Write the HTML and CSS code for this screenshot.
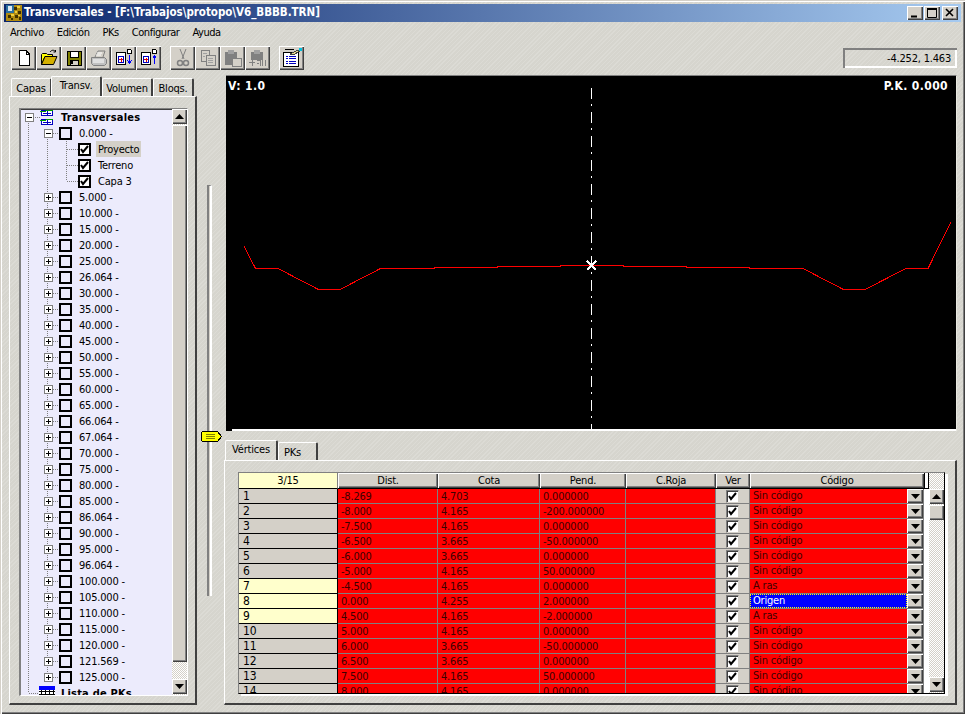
FILE: index.html
```html
<!DOCTYPE html>
<html lang="es">
<head>
<meta charset="utf-8">
<title>Transversales</title>
<link rel="stylesheet" href="styles.css">
</head>
<body>
<svg class="defs" width="0" height="0" aria-hidden="true">
  <symbol id="ck" viewBox="0 0 13 13"><path d="M3 6l2 3 5-6" fill="none" stroke="#000" stroke-width="2"/></symbol>
  <symbol id="plus" viewBox="0 0 9 9"><rect x=".5" y=".5" width="8" height="8" fill="#fff" stroke="#808080"/><path d="M2 4.500h5M4.500 2v5" stroke="#000"/></symbol>
  <symbol id="minus" viewBox="0 0 9 9"><rect x=".5" y=".5" width="8" height="8" fill="#fff" stroke="#808080"/><path d="M2 4.500h5" stroke="#000"/></symbol>
  <symbol id="up" viewBox="0 0 9 5"><path d="M4.500 0L9 5H0z"/></symbol>
  <symbol id="down" viewBox="0 0 9 5"><path d="M0 0h9L4.500 5z"/></symbol>
</svg>
<div class="window">
  <header class="title">
    <svg class="app-icon" width="16" height="16" viewBox="0 0 16 16"><rect width="16" height="16" fill="#b08a10"/><rect width="8" height="8" fill="#2a6f9f"/><rect x="2" y="1" width="4" height="5" fill="#dfe8f0"/><path d="M8 2h3v3H8zM12 6h3v3h-3zM9 10h3v3H9zM2 10h3v3H2zM5 13h2v2H5zM13 12h2v3h-2z" fill="#403000"/><path d="M11 1h3v2h-3zM9 6h2v2H9zM5 9h3v2H5zM12 10h2v1h-2z" fill="#f0d040"/></svg>
    <span class="title-text">Transversales - [F:\Trabajos\protopo\V6_BBBB.TRN]</span>
    <div class="caption-btns">
      <button class="cap"><svg width="14" height="12" viewBox="0 0 14 12"><path d="M3 9.500h6" stroke="#000" stroke-width="2"/></svg></button>
      <button class="cap"><svg width="14" height="12" viewBox="0 0 14 12"><path d="M2.500 1.500h9v9h-9z" fill="none" stroke="#000"/><path d="M2 2h10" stroke="#000" stroke-width="2"/></svg></button>
      <button class="cap cap-x"><svg width="14" height="12" viewBox="0 0 14 12"><path d="M3 2l7 7M10 2l-7 7" stroke="#000" stroke-width="1.600"/></svg></button>
    </div>
  </header>
  <nav class="menu"><span>Archivo</span><span>Edición</span><span>PKs</span><span>Configurar</span><span>Ayuda</span></nav>
  <div class="toolbar">
    <div class="tools">
      <button class="tool"><svg width="18" height="18" viewBox="0 0 18 18" shape-rendering="crispEdges"><path d="M4 1.500h7l3.500 3.500v11.500H4z" fill="#fff" stroke="#000"/><path d="M11 2v3h3" fill="none" stroke="#000"/></svg></button>
      <button class="tool"><svg width="18" height="18" viewBox="0 0 18 18"><path d="M1.500 15.500V5.500l1-1h4l1 1h5v2H5L1.500 15.500z" fill="#ffff00" stroke="#000"/><path d="M1.500 15.500l3.500-8h12l-3.500 8z" fill="#d4b000" stroke="#000"/><path d="M10 3c2-2.500 4-2 5.500-.5M15.500 1v2h-2" fill="none" stroke="#000"/></svg></button>
      <button class="tool"><svg width="18" height="18" viewBox="0 0 18 18" shape-rendering="crispEdges"><path d="M2 2h14v14H2z" fill="#808000" stroke="#000"/><path d="M5 2h8v6H5z" fill="#fff" stroke="#000"/><path d="M5 11h8v5H5z" fill="#d4d0c8" stroke="#000"/><path d="M6 12h2v3H6z" fill="#000"/></svg></button>
      <button class="tool"><svg width="18" height="18" viewBox="0 0 18 18" fill="none" stroke="#808080"><path d="M5 8l3-6h7l-2 6"/><path d="M1.500 8.500h13l2 2v4l-2 2h-11l-2-2z" fill="#c0c0c0"/><path d="M3 11h11M3 13h11M7 4h5M6 6h5" stroke="#fff"/></svg></button>
      <button class="tool"><svg width="20" height="20" viewBox="0 0 20 20" shape-rendering="crispEdges"><path d="M2.500 4.500h9v12h-9z" fill="#fff" stroke="#000"/><path d="M4.500 8.500h5v6h-5z" fill="#fff" stroke="#0000c0"/><path d="M5 11.500h4M7 9.500v4" stroke="#e00000"/><path d="M13.500 1.500h3l1 1v3h-4z" fill="#fff" stroke="#000"/><path d="M15.500 7v8M13.500 12.500l2 3 2-3" fill="none" stroke="#0000ff"/></svg></button>
      <button class="tool"><svg width="20" height="20" viewBox="0 0 20 20" shape-rendering="crispEdges"><path d="M2.500 4.500h9v12h-9z" fill="#fff" stroke="#000"/><path d="M4.500 8.500h5v6h-5z" fill="#fff" stroke="#0000c0"/><path d="M5 11.500h4M7 9.500v4" stroke="#e00000"/><path d="M13.500 1.500h3l1 1v3h-4z" fill="#fff" stroke="#000"/><path d="M15.500 16V8M13.500 10.500l2-3 2 3" fill="none" stroke="#0000ff"/></svg></button>
    </div>
    <div class="tools group2">
      <button class="tool"><svg width="18" height="20" viewBox="0 0 18 20" fill="none" stroke="#808080"><path d="M6 1l4 10M12 1L8 11"/><circle cx="6" cy="15" r="2.500" stroke-width="1.500"/><circle cx="12" cy="15" r="2.500" stroke-width="1.500"/></svg></button>
      <button class="tool"><svg width="18" height="18" viewBox="0 0 18 18" fill="#d4d0c8" stroke="#808080" shape-rendering="crispEdges"><path d="M2 1.500h8v11H2z"/><path d="M7 6.500h9v10H7z"/><path d="M4 4h4M4 7h2M9 9h5M9 11h5M9 13h5" stroke="#a0a0a0"/></svg></button>
      <button class="tool"><svg width="20" height="20" viewBox="0 0 20 20" shape-rendering="crispEdges"><path d="M2 4h12v13H2z" fill="#808080"/><path d="M5 2h6v4H5z" fill="#a0a0a0"/><path d="M9 10h9v8H9z" fill="#d4d0c8" stroke="#808080"/></svg></button>
      <button class="tool"><svg width="20" height="20" viewBox="0 0 20 20" shape-rendering="crispEdges"><path d="M3 4h12v8H3z" fill="#808080"/><path d="M6 2h6v4H6z" fill="#a0a0a0"/><path d="M1 14h6M4 12v6M9 12h3v6M9 15h2M14 12v6M17 12v6" stroke="#808080" fill="none"/></svg></button>
    </div>
    <div class="tools group3">
      <button class="tool"><svg width="22" height="20" viewBox="0 0 22 20" shape-rendering="crispEdges"><path d="M2.500 4.500h15v14h-15z" fill="#fff" stroke="#000"/><path d="M4 1.500h9" stroke="#000"/><path d="M5 8h2M8 8h7M5 10.500h2M8 10.500h7M5 13h2M8 13h7M5 15.500h2M8 15.500h7" stroke="#0000c0"/><path d="M9 6l8-4 2 1-7 4z" fill="#e8d890" stroke="#404040"/><path d="M18 0h3v3h-3z" fill="#00c0e0"/></svg></button>
    </div>
    <output class="coords">-4.252, 1.463</output>
  </div>

  <main class="main">
    <aside class="left">
      <div class="tabs">
        <span class="tab tab-capas">Capas</span><span class="tab tab-on tab-transv">Transv.</span><span class="tab tab-vol">Volumen</span><span class="tab tab-bloq">Bloqs.</span>
      </div>
      <div class="panel-left">
        <div class="tree">
          <div class="tree-list">
            <div class="r root"><svg class="exp" width="9" height="9"><use href="#minus"/></svg><svg class="root-ico" width="16" height="18" viewBox="0 0 16 18" shape-rendering="crispEdges"><path d="M2.500 2.500h11v5h-11zM2.500 11.500h11v5h-11z" fill="#fff" stroke="#0000c0"/><path d="M8 3v4M8 12v4M4 5h8M4 14h8" stroke="#0000c0"/><path d="M1 3h6M7 2h7M1 12h6M7 11h7" stroke="#00a000"/></svg><b>Transversales</b></div>
            <div class="r first"><svg class="exp" width="9" height="9"><use href="#minus"/></svg><i class="box"></i><span>0.000 -</span></div>
            <div class="r2"><i class="cbx"><svg width="13" height="13"><use href="#ck"/></svg></i><span class="sel">Proyecto</span></div>
            <div class="r2"><i class="cbx"><svg width="13" height="13"><use href="#ck"/></svg></i><span>Terreno</span></div>
            <div class="r2 r2-end"><i class="cbx"><svg width="13" height="13"><use href="#ck"/></svg></i><span>Capa 3</span></div>
            <div class="r"><svg class="exp" width="9" height="9"><use href="#plus"/></svg><i class="box"></i><span>5.000 -</span></div>
            <div class="r"><svg class="exp" width="9" height="9"><use href="#plus"/></svg><i class="box"></i><span>10.000 -</span></div>
            <div class="r"><svg class="exp" width="9" height="9"><use href="#plus"/></svg><i class="box"></i><span>15.000 -</span></div>
            <div class="r"><svg class="exp" width="9" height="9"><use href="#plus"/></svg><i class="box"></i><span>20.000 -</span></div>
            <div class="r"><svg class="exp" width="9" height="9"><use href="#plus"/></svg><i class="box"></i><span>25.000 -</span></div>
            <div class="r"><svg class="exp" width="9" height="9"><use href="#plus"/></svg><i class="box"></i><span>26.064 -</span></div>
            <div class="r"><svg class="exp" width="9" height="9"><use href="#plus"/></svg><i class="box"></i><span>30.000 -</span></div>
            <div class="r"><svg class="exp" width="9" height="9"><use href="#plus"/></svg><i class="box"></i><span>35.000 -</span></div>
            <div class="r"><svg class="exp" width="9" height="9"><use href="#plus"/></svg><i class="box"></i><span>40.000 -</span></div>
            <div class="r"><svg class="exp" width="9" height="9"><use href="#plus"/></svg><i class="box"></i><span>45.000 -</span></div>
            <div class="r"><svg class="exp" width="9" height="9"><use href="#plus"/></svg><i class="box"></i><span>50.000 -</span></div>
            <div class="r"><svg class="exp" width="9" height="9"><use href="#plus"/></svg><i class="box"></i><span>55.000 -</span></div>
            <div class="r"><svg class="exp" width="9" height="9"><use href="#plus"/></svg><i class="box"></i><span>60.000 -</span></div>
            <div class="r"><svg class="exp" width="9" height="9"><use href="#plus"/></svg><i class="box"></i><span>65.000 -</span></div>
            <div class="r"><svg class="exp" width="9" height="9"><use href="#plus"/></svg><i class="box"></i><span>66.064 -</span></div>
            <div class="r"><svg class="exp" width="9" height="9"><use href="#plus"/></svg><i class="box"></i><span>67.064 -</span></div>
            <div class="r"><svg class="exp" width="9" height="9"><use href="#plus"/></svg><i class="box"></i><span>70.000 -</span></div>
            <div class="r"><svg class="exp" width="9" height="9"><use href="#plus"/></svg><i class="box"></i><span>75.000 -</span></div>
            <div class="r"><svg class="exp" width="9" height="9"><use href="#plus"/></svg><i class="box"></i><span>80.000 -</span></div>
            <div class="r"><svg class="exp" width="9" height="9"><use href="#plus"/></svg><i class="box"></i><span>85.000 -</span></div>
            <div class="r"><svg class="exp" width="9" height="9"><use href="#plus"/></svg><i class="box"></i><span>86.064 -</span></div>
            <div class="r"><svg class="exp" width="9" height="9"><use href="#plus"/></svg><i class="box"></i><span>90.000 -</span></div>
            <div class="r"><svg class="exp" width="9" height="9"><use href="#plus"/></svg><i class="box"></i><span>95.000 -</span></div>
            <div class="r"><svg class="exp" width="9" height="9"><use href="#plus"/></svg><i class="box"></i><span>96.064 -</span></div>
            <div class="r"><svg class="exp" width="9" height="9"><use href="#plus"/></svg><i class="box"></i><span>100.000 -</span></div>
            <div class="r"><svg class="exp" width="9" height="9"><use href="#plus"/></svg><i class="box"></i><span>105.000 -</span></div>
            <div class="r"><svg class="exp" width="9" height="9"><use href="#plus"/></svg><i class="box"></i><span>110.000 -</span></div>
            <div class="r"><svg class="exp" width="9" height="9"><use href="#plus"/></svg><i class="box"></i><span>115.000 -</span></div>
            <div class="r"><svg class="exp" width="9" height="9"><use href="#plus"/></svg><i class="box"></i><span>120.000 -</span></div>
            <div class="r"><svg class="exp" width="9" height="9"><use href="#plus"/></svg><i class="box"></i><span>121.569 -</span></div>
            <div class="r last"><svg class="exp" width="9" height="9"><use href="#plus"/></svg><i class="box"></i><span>125.000 -</span></div>
            <div class="r lista"><svg class="lista-ico" width="16" height="14" viewBox="0 0 16 14" shape-rendering="crispEdges"><path d="M0 0h16v4H0z" fill="#0000ff"/><path d="M0 4h16v10H0z" fill="#fff"/><path d="M0 5h16M0 8h16M0 11h16M2 4v10M6 4v10M10 4v10M14 4v10" stroke="#000" fill="none"/></svg><b>Lista de PKs</b></div>
          </div>
          <div class="vscroll">
            <button class="sbtn"><svg width="9" height="5"><use href="#up"/></svg></button>
            <div class="thumb thumb-long"></div>
            <div class="track"></div>
            <button class="sbtn"><svg width="9" height="5"><use href="#down"/></svg></button>
          </div>
        </div>
      </div>
    </aside>

    <div class="slider">
      <div class="groove"></div>
      <svg class="knob" width="21" height="12" viewBox="0 0 21 12" shape-rendering="crispEdges"><path d="M.5 1.500l1-1h15l4 5-4 5h-15l-1-1z" fill="#ffff00" stroke="#000"/><path d="M5 3.500h9M5 5.500h9M5 7.500h9" stroke="#808000"/></svg>
    </div>

    <section class="right">
      <div class="canvas">
        <svg class="plot" width="730" height="355" viewBox="226 76 730 355">
          <path class="axis" d="M591.500 88V431"/>
          <polyline class="profile" points="244,246 255.500,268.500 278,268.500 318.500,289.500 340,289.500 380.500,268.500 434,268.500 434,267.500 497,267.500 497,266.500 560,266.500 560,265.500 623,265.500 623,266.500 686,266.500 686,267.500 749,267.500 749,268.500 803,268.500 843.500,289.500 865,289.500 906,268.500 928,268.500 951,222"/>
          <path class="star" d="M587 261l9 9M596 261l-9 9"/>
        </svg>
        <span class="lab lab-v">V: 1.0</span>
        <span class="lab lab-pk">P.K. 0.000</span>
        <div class="base"></div>
      </div>
      <div class="tabs tabs-r">
        <span class="tab tab-on tab-vert">Vértices</span><span class="tab tab-pks">PKs</span>
      </div>
      <div class="panel-right">
        <div class="grid">
          <table class="tbl">
            <colgroup><col class="c0"><col class="c1"><col class="c2"><col class="c3"><col class="c4"><col class="c5"><col class="c6"><col class="c7"></colgroup>
            <thead><tr><th class="count">3/15</th><th>Dist.</th><th>Cota</th><th>Pend.</th><th>C.Roja</th><th>Ver</th><th>Código</th><th class="stub"></th></tr></thead>
            <tbody>
              <tr><td class="n">1</td><td>-8.269</td><td>4.703</td><td>0.000000</td><td></td><td class="v"><i class="tick"><svg width="13" height="13"><use href="#ck"/></svg></i></td><td class="code"><span>Sin código</span><button class="drop"><svg width="9" height="5"><use href="#down"/></svg></button></td><td class="gap"></td></tr>
              <tr><td class="n">2</td><td>-8.000</td><td>4.165</td><td>-200.000000</td><td></td><td class="v"><i class="tick"><svg width="13" height="13"><use href="#ck"/></svg></i></td><td class="code"><span>Sin código</span><button class="drop"><svg width="9" height="5"><use href="#down"/></svg></button></td><td class="gap"></td></tr>
              <tr><td class="n">3</td><td>-7.500</td><td>4.165</td><td>0.000000</td><td></td><td class="v"><i class="tick"><svg width="13" height="13"><use href="#ck"/></svg></i></td><td class="code"><span>Sin código</span><button class="drop"><svg width="9" height="5"><use href="#down"/></svg></button></td><td class="gap"></td></tr>
              <tr><td class="n">4</td><td>-6.500</td><td>3.665</td><td>-50.000000</td><td></td><td class="v"><i class="tick"><svg width="13" height="13"><use href="#ck"/></svg></i></td><td class="code"><span>Sin código</span><button class="drop"><svg width="9" height="5"><use href="#down"/></svg></button></td><td class="gap"></td></tr>
              <tr><td class="n">5</td><td>-6.000</td><td>3.665</td><td>0.000000</td><td></td><td class="v"><i class="tick"><svg width="13" height="13"><use href="#ck"/></svg></i></td><td class="code"><span>Sin código</span><button class="drop"><svg width="9" height="5"><use href="#down"/></svg></button></td><td class="gap"></td></tr>
              <tr><td class="n">6</td><td>-5.000</td><td>4.165</td><td>50.000000</td><td></td><td class="v"><i class="tick"><svg width="13" height="13"><use href="#ck"/></svg></i></td><td class="code"><span>Sin código</span><button class="drop"><svg width="9" height="5"><use href="#down"/></svg></button></td><td class="gap"></td></tr>
              <tr><td class="n hl">7</td><td>-4.500</td><td>4.165</td><td>0.000000</td><td></td><td class="v"><i class="tick"><svg width="13" height="13"><use href="#ck"/></svg></i></td><td class="code"><span>A ras</span><button class="drop"><svg width="9" height="5"><use href="#down"/></svg></button></td><td class="gap"></td></tr>
              <tr><td class="n hl">8</td><td>0.000</td><td>4.255</td><td>2.000000</td><td></td><td class="v"><i class="tick"><svg width="13" height="13"><use href="#ck"/></svg></i></td><td class="code active"><span>Origen</span><button class="drop"><svg width="9" height="5"><use href="#down"/></svg></button></td><td class="gap"></td></tr>
              <tr><td class="n hl">9</td><td>4.500</td><td>4.165</td><td>-2.000000</td><td></td><td class="v"><i class="tick"><svg width="13" height="13"><use href="#ck"/></svg></i></td><td class="code"><span>A ras</span><button class="drop"><svg width="9" height="5"><use href="#down"/></svg></button></td><td class="gap"></td></tr>
              <tr><td class="n">10</td><td>5.000</td><td>4.165</td><td>0.000000</td><td></td><td class="v"><i class="tick"><svg width="13" height="13"><use href="#ck"/></svg></i></td><td class="code"><span>Sin código</span><button class="drop"><svg width="9" height="5"><use href="#down"/></svg></button></td><td class="gap"></td></tr>
              <tr><td class="n">11</td><td>6.000</td><td>3.665</td><td>-50.000000</td><td></td><td class="v"><i class="tick"><svg width="13" height="13"><use href="#ck"/></svg></i></td><td class="code"><span>Sin código</span><button class="drop"><svg width="9" height="5"><use href="#down"/></svg></button></td><td class="gap"></td></tr>
              <tr><td class="n">12</td><td>6.500</td><td>3.665</td><td>0.000000</td><td></td><td class="v"><i class="tick"><svg width="13" height="13"><use href="#ck"/></svg></i></td><td class="code"><span>Sin código</span><button class="drop"><svg width="9" height="5"><use href="#down"/></svg></button></td><td class="gap"></td></tr>
              <tr><td class="n">13</td><td>7.500</td><td>4.165</td><td>50.000000</td><td></td><td class="v"><i class="tick"><svg width="13" height="13"><use href="#ck"/></svg></i></td><td class="code"><span>Sin código</span><button class="drop"><svg width="9" height="5"><use href="#down"/></svg></button></td><td class="gap"></td></tr>
              <tr><td class="n">14</td><td>8.000</td><td>4.165</td><td>0.000000</td><td></td><td class="v"><i class="tick"><svg width="13" height="13"><use href="#ck"/></svg></i></td><td class="code"><span>Sin código</span><button class="drop"><svg width="9" height="5"><use href="#down"/></svg></button></td><td class="gap"></td></tr>
            </tbody>
          </table>
          <div class="vscroll vscroll-grid">
            <div class="head-slot"></div>
            <button class="sbtn"><svg width="9" height="5"><use href="#up"/></svg></button>
            <div class="thumb thumb-grid"></div>
            <div class="track-clear"></div>
            <button class="sbtn"><svg width="9" height="5"><use href="#down"/></svg></button>
          </div>
        </div>
      </div>
    </section>
  </main>
</div>
</body>
</html>
```
FILE: styles.css
```css
* { box-sizing: border-box; }
html, body { margin: 0; padding: 0; }
body {
  width: 965px;
  height: 714px;
  overflow: hidden;
  font: 11px/1 "DejaVu Sans Condensed", "DejaVu Sans", sans-serif;
  font-stretch: condensed;
  letter-spacing: -.2px;
  color: #000;
  --face: #d4d0c8;
  --v: repeating-linear-gradient(#808080 0 1px, transparent 1px 2px);
  --h: repeating-linear-gradient(90deg, #808080 0 1px, transparent 1px 2px);
  --raised: inset 1px 1px #fff, inset -1px -1px #404040, inset -2px -2px #808080;
  --stipple: repeating-conic-gradient(#d4d0c8 0 25%, #fff 0 50%) 0 0 / 2px 2px;
}
button { padding: 0; margin: 0; border: 0; background: var(--face); display: flex; align-items: center; justify-content: center; }
.defs { position: absolute; }

.window {
  width: 965px;
  height: 714px;
  padding: 4px;
  background: #d6d5ce repeating-linear-gradient(135deg, rgba(255,255,255,.14) 0 1px, transparent 1px 3px);
  box-shadow: inset 1px 1px #d4d0c8, inset 2px 2px #fff, inset -1px -1px #404040, inset -2px -2px #808080;
}
.title {
  height: 18px;
  display: flex;
  align-items: center;
  padding: 0 3px 0 2px;
  background: linear-gradient(90deg, #0a246a, #a6caf0);
}
.app-icon { flex: none; margin-right: 2px; }
.title-text { font-weight: 700; font-size: 11.5px; color: #fff; white-space: nowrap; letter-spacing: -.04px; }
.caption-btns { margin-left: auto; display: flex; }
.cap { width: 16px; height: 14px; box-shadow: var(--raised); margin-left: 1px; }
.cap-x { margin-left: 2px; }

.menu { height: 19px; margin-top: 1px; padding-left: 6px; display: flex; align-items: center; gap: 13px; font-size: 11px; letter-spacing: -.45px; }

.toolbar { height: 24px; margin-top: 4px; padding-left: 7px; display: flex; align-items: stretch; position: relative; }
.tools { display: flex; }
.group2 { margin-left: 9px; }
.group3 { margin-left: 9px; }
.tool { width: 25px; height: 24px; box-shadow: var(--raised); }
.coords {
  margin: 2px 0 0 auto;
  margin-right: 4px;
  width: 114px;
  height: 20px;
  padding: 0 6px 0 0;
  display: flex;
  align-items: center;
  justify-content: flex-end;
  box-shadow: inset 2px 2px #808080, inset -2px -2px #fff;
}

.main { display: flex; margin-top: 5px; height: 630px; padding-left: 5px; }
.left { width: 188px; flex: none; display: flex; flex-direction: column; }
.tabs { height: 21px; display: flex; align-items: flex-end; padding-left: 2px; }
.tab {
  height: 18px;
  display: flex;
  align-items: center;
  justify-content: center;
  border: 1px solid #fff;
  border-bottom: 0;
  border-right: 2px solid #404040;
  border-radius: 2px 2px 0 0;
  padding-top: 2px;
}
.tab-on { height: 20px; padding-top: 0; padding-bottom: 3px; margin: 0 -1px; position: relative; }
.tab-capas { width: 41px; }
.tab-transv { width: 51px; }
.tab-vol { width: 51px; margin-left: 1px; }
.tab-bloq { width: 41px; }
.panel-left {
  height: 609px;
  padding: 11px 0 0 9px;
  border: 1px solid;
  border-width: 1px 2px 2px 1px;
  border-color: #fff #404040 #404040 #fff;
}
.tree {
  width: 169px;
  height: 588px;
  display: flex;
  overflow: hidden;
  background: #ecebfc;
  border-style: solid;
  border-color: #808080 #fff #fff #808080;
  border-width: 1px 1px 1px 2px;
  box-shadow: inset 0 1px #404040;
}
.tree-list { width: 151px; flex: none; height: 586px; overflow: hidden; }
.r, .r2 { height: 16px; display: flex; align-items: center; white-space: nowrap; }
.r {
  padding-left: 23px;
  background:
    var(--v) 7px 0 / 1px 16px no-repeat,
    var(--v) 26px 0 / 1px 16px no-repeat,
    var(--h) 32px 8px / 6px 1px no-repeat;
}
.r span { margin-left: 7px; }
.exp { flex: none; }
.box { flex: none; width: 13px; height: 13px; margin-left: 6px; border: 2px solid #000; background: #ecebfc; }
.r.root {
  padding-left: 4px;
  background:
    var(--v) 7px 8px / 1px 8px no-repeat,
    var(--h) 12px 8px / 7px 1px no-repeat;
}
.root-ico { margin-left: 5px; flex: none; }
.root b { margin-left: 6px; letter-spacing: .2px; }
.r.first {
  background:
    var(--v) 7px 0 / 1px 16px no-repeat,
    var(--v) 26px 8px / 1px 8px no-repeat,
    var(--v) 45px 8px / 1px 8px no-repeat,
    var(--h) 32px 8px / 6px 1px no-repeat;
}
.r.last {
  background:
    var(--v) 7px 0 / 1px 16px no-repeat,
    var(--v) 26px 0 / 1px 8px no-repeat,
    var(--h) 32px 8px / 6px 1px no-repeat;
}
.r.lista {
  padding-left: 18px;
  background:
    var(--v) 7px 0 / 1px 8px no-repeat,
    var(--h) 8px 8px / 10px 1px no-repeat;
}
.lista-ico { flex: none; }
.lista b { margin-left: 6px; letter-spacing: .2px; }
.r2 {
  padding-left: 57px;
  background:
    var(--v) 7px 0 / 1px 16px no-repeat,
    var(--v) 26px 0 / 1px 16px no-repeat,
    var(--v) 45px 0 / 1px 16px no-repeat,
    var(--h) 46px 8px / 12px 1px no-repeat;
}
.r2.r2-end {
  background:
    var(--v) 7px 0 / 1px 16px no-repeat,
    var(--v) 26px 0 / 1px 16px no-repeat,
    var(--v) 45px 0 / 1px 8px no-repeat,
    var(--h) 46px 8px / 12px 1px no-repeat;
}
.cbx { flex: none; width: 13px; height: 13px; border: 2px solid #000; background: #fff; display: flex; align-items: center; justify-content: center; }
.cbx svg { flex: none; }
.r2 span { margin-left: 5px; padding: 0 2px; height: 16px; display: flex; align-items: center; }
.r2 .sel { background: var(--face); }

.vscroll { width: 15px; flex: none; display: flex; flex-direction: column; background: var(--stipple); }
.sbtn { width: 15px; height: 15px; flex: none; box-shadow: var(--raised); }
.thumb { background: var(--face); box-shadow: var(--raised); width: 15px; flex: none; margin-top: 1px; }
.thumb-long { height: 537px; }
.track { flex: 1; }
.track-clear { flex: 1; }
.vscroll .sbtn:last-child { margin-bottom: 1px; }

.slider { width: 27px; flex: none; position: relative; }
.groove { margin: 110px 0 0 10px; width: 5px; height: 411px; border-left: 2px solid #808080; border-right: 2px solid #fff; border-top: 1px solid #808080; background: #d4d0c8; }
.knob { position: absolute; left: 4px; top: 356px; }

.right { width: 733px; flex: none; display: flex; flex-direction: column; }
.canvas {
  margin-left: 2px;
  width: 731px;
  height: 356px;
  position: relative;
  background: #000;
  border-top: 1px solid #808080;
  border-right: 1px solid #e8e8e0;
  overflow: hidden;
}
.plot { display: block; }
.axis { stroke: #fff; stroke-width: 1; fill: none; stroke-dasharray: 11 5 2 6; shape-rendering: crispEdges; }
.profile { fill: none; stroke: #f00; stroke-width: 1; shape-rendering: crispEdges; }
.star { stroke: #fff; stroke-width: 2; fill: none; shape-rendering: crispEdges; }
.lab { position: absolute; top: 4px; color: #fff; font-weight: 700; font-size: 12px; letter-spacing: .4px; }
.lab-v { left: 2px; }
.lab-pk { right: 8px; }
.base { position: absolute; left: 6px; right: 0; bottom: 0; height: 2px; background: #fff; }
.tabs-r { margin-top: 8px; height: 21px; padding-left: 2px; }
.tab-vert { width: 53px; }
.tab-pks { width: 40px; padding-right: 10px; margin-left: 1px; }
.panel-right {
  height: 245px;
  padding: 11px 0 0 13px;
  border: 1px solid;
  border-width: 1px 2px 2px 1px;
  border-color: #fff #404040 #404040 #fff;
}
.grid {
  width: 707px;
  height: 222px;
  display: flex;
  overflow: hidden;
  border: 1px solid;
  border-color: #808080 #000 #000 #808080;
  box-shadow: 3px 2px #fff;
  background: #fff;
}
.tbl { width: 690px; flex: none; table-layout: fixed; border-collapse: separate; border-spacing: 0; height: 0; }
.c0 { width: 99px; } .c1 { width: 100px; } .c2 { width: 102px; } .c3 { width: 86px; }
.c4 { width: 90px; } .c5 { width: 34px; } .c6 { width: 174px; } .c7 { width: 5px; }
.tbl th { height: 16px; padding: 0; font-weight: 400; text-align: center; background: var(--face); box-shadow: var(--raised); border-bottom: 1px solid #000; }
.tbl th.count { background: #ffffcc; box-shadow: none; border-right: 1px solid #808080; }
.tbl th.stub { background: #fff; box-shadow: none; border-left: 1px solid #000; border-right: 1px solid #000; }
.tbl td {
  height: 15px;
  padding: 0 0 0 3px;
  background: #f00;
  color: #3c0000;
  border-bottom: 1px solid #808080;
  border-right: 1px solid #808080;
  overflow: hidden;
  white-space: nowrap;
}
.tbl td.n { font-size: 12px; color: #000; padding-left: 4px; background: var(--face); border-bottom-color: #000; border-right-color: #000; }
.tbl td.n.hl { background: #ffffcc; }
.tbl td.v { background: var(--face); padding: 0; }
.tick { display: block; width: 13px; height: 13px; margin: 0 0 0 10px; background: #fff; border: 1px solid; border-color: #808080 #d4d0c8 #d4d0c8 #808080; box-shadow: inset 1px 1px #404040; }
.tick svg { display: block; margin: -1px 0 0 -1px; }
.tbl td.code { padding: 0; }
.code { position: relative; }
.code span { display: block; padding-left: 3px; height: 14px; line-height: 14px; width: 157px; }
.code .drop { position: absolute; right: 0; top: 0; width: 16px; height: 14px; box-shadow: var(--raised); }
.tbl td.active span { background: #0000ff; color: #fff; outline: 1px dotted #ffff00; outline-offset: -1px; }
.tbl td.gap { background: #fff; border: 0; padding: 0; }
.vscroll-grid { height: 220px; }
.head-slot { height: 16px; flex: none; }
.thumb-grid { height: 15px; }
```
